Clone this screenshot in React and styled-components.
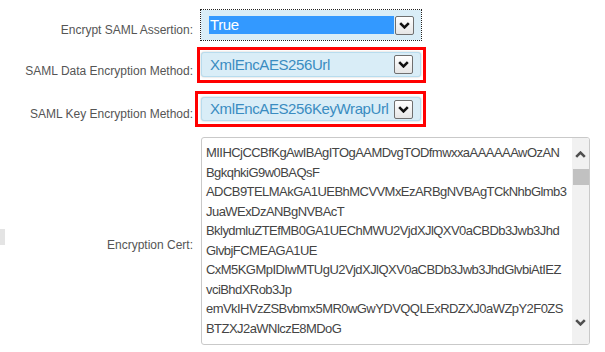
import React from "react";
import styled, { createGlobalStyle } from "styled-components";

const GlobalStyle = createGlobalStyle`
  html, body {
    margin: 0;
    padding: 0;
    background: #ffffff;
    font-family: "Liberation Sans", Arial, sans-serif;
  }
`;

const Form = styled.div`
  display: flex;
  flex-direction: column;
  padding-top: 10px;
  width: 605px;
  height: 352px;
  box-sizing: border-box;
  overflow: hidden;
`;

const Row = styled.div`
  display: grid;
  grid-template-columns: 193px 1fr;
  column-gap: 8px;
  align-items: start;
  margin-top: ${(p) => p.$gap || 0}px;
`;

const Label = styled.div`
  font-size: 12px;
  line-height: 14px;
  color: #555555;
  text-align: right;
  white-space: nowrap;
  margin-top: ${(p) => p.$offset}px;
`;

const CertLabelCell = styled.div`
  display: flex;
  justify-content: space-between;
  align-items: flex-start;
`;

const SideTab = styled.div`
  width: 5px;
  height: 16px;
  margin-top: 92px;
  background: #e4e4e4;
`;

const SelectBox = styled.div`
  display: flex;
  align-items: center;
  justify-content: space-between;
  box-sizing: border-box;
  width: 220px;
  height: ${(p) => p.$height}px;
  padding: 0 7px 0 8px;
  background: #d9edf7;
  border: ${(p) => (p.$focused ? "none" : "1px solid #b8dcee")};
  border-radius: ${(p) => (p.$focused ? "0" : "3px")};
  outline: ${(p) => (p.$focused ? "1px dotted #222222" : "none")};
  box-shadow: ${(p) => (p.$focused ? "none" : "0 0 2px rgba(0, 0, 0, 0.25)")};
  justify-self: start;
`;

const Value = styled.span`
  font-size: 15px;
  letter-spacing: -0.4px;
  line-height: 18px;
  color: ${(p) => (p.$selected ? "#ffffff" : "#3a8cc1")};
  background: ${(p) => (p.$selected ? "#3399ff" : "transparent")};
  flex: ${(p) => (p.$selected ? 1 : "none")};
  padding-left: ${(p) => (p.$selected ? 1 : 0)}px;
  margin-right: ${(p) => (p.$selected ? 1 : 0)}px;
  white-space: nowrap;
`;

const DropButton = styled.div`
  display: flex;
  align-items: center;
  justify-content: center;
  box-sizing: border-box;
  width: 19px;
  height: 19px;
  flex: none;
  border: 1px solid #6f6f6f;
  border-radius: 2px;
  background: linear-gradient(#ffffff, #e6e6e6);
`;

const Highlight = styled.div`
  justify-self: start;
  border: 3px solid #ff0000;
  padding: ${(p) => p.$pad};
  margin-left: ${(p) => p.$shift}px;
`;

const CertBox = styled.div`
  display: flex;
  box-sizing: border-box;
  width: 389px;
  height: 208px;
  border: 1px solid #c9c9c9;
  border-radius: 3px;
  overflow: hidden;
`;

const CertText = styled.div`
  flex: 1;
  padding: 5px 0 0 4px;
  font-size: 13px;
  letter-spacing: -0.55px;
  line-height: 19.5px;
  color: #444444;
  overflow: hidden;
`;

const CertLine = styled.div`
  white-space: nowrap;
`;

const ScrollTrack = styled.div`
  display: flex;
  flex-direction: column;
  align-items: center;
  width: 17px;
  flex: none;
  background: #f1f1f1;
  padding: 13px 0 18px 0;
  box-sizing: border-box;
`;

const Thumb = styled.div`
  width: 16px;
  height: 16px;
  margin: 11px 0 0 1px;
  background: #c1c1c1;
`;

const Spacer = styled.div`
  flex: 1;
`;

function Chevron({ up, color = "#111", width = 10, height = 6, stroke = 2 }) {
  const d = up ? "M1 5.5 L5 1.5 L9 5.5" : "M1 1 L5 5 L9 1";
  return (
    <svg width={width} height={height} viewBox="0 0 10 6.5">
      <path d={d} fill="none" stroke={color} strokeWidth={stroke} />
    </svg>
  );
}

function Select({ value, height, focused }) {
  return (
    <SelectBox $height={height} $focused={focused}>
      <Value $selected={focused}>{value}</Value>
      <DropButton>
        <Chevron width={11} height={7} stroke={2.4} />
      </DropButton>
    </SelectBox>
  );
}

const certLines = [
  "MIIHCjCCBfKgAwIBAgITOgAAMDvgTODfmwxxaAAAAAAwOzAN",
  "BgkqhkiG9w0BAQsF",
  "ADCB9TELMAkGA1UEBhMCVVMxEzARBgNVBAgTCkNhbGlmb3",
  "JuaWExDzANBgNVBAcT",
  "BklydmluZTEfMB0GA1UEChMWU2VjdXJlQXV0aCBDb3Jwb3Jhd",
  "GlvbjFCMEAGA1UE",
  "CxM5KGMpIDIwMTUgU2VjdXJlQXV0aCBDb3Jwb3JhdGlvbiAtIEZ",
  "vciBhdXRob3Jp",
  "emVkIHVzZSBvbmx5MR0wGwYDVQQLExRDZXJ0aWZpY2F0ZS",
  "BTZXJ2aWNlczE8MDoG",
];

export default function App() {
  return (
    <>
      <GlobalStyle />
      <Form>
        <Row>
          <Label $offset={13}>Encrypt SAML Assertion:</Label>
          <Select value="True" height={30} focused />
        </Row>

        <Row $gap={7}>
          <Label $offset={17}>SAML Data Encryption Method:</Label>
          <Highlight $pad="2px 2px 3px 1px" $shift={-4}>
            <Select value="XmlEncAES256Url" height={25} />
          </Highlight>
        </Row>

        <Row $gap={8}>
          <Label $offset={16}>SAML Key Encryption Method:</Label>
          <Highlight $pad="3px 2px 3px 3px" $shift={-6}>
            <Select value="XmlEncAES256KeyWrapUrl" height={24} />
          </Highlight>
        </Row>

        <Row $gap={10}>
          <CertLabelCell>
            <SideTab />
            <Label $offset={101}>Encryption Cert:</Label>
          </CertLabelCell>
          <CertBox>
            <CertText>
              {certLines.map((line) => (
                <CertLine key={line}>{line}</CertLine>
              ))}
            </CertText>
            <ScrollTrack>
              <Chevron up color="#505050" width={11} height={7} stroke={2.4} />
              <Thumb />
              <Spacer />
              <Chevron color="#505050" width={11} height={7} stroke={2.4} />
            </ScrollTrack>
          </CertBox>
        </Row>
      </Form>
    </>
  );
}
